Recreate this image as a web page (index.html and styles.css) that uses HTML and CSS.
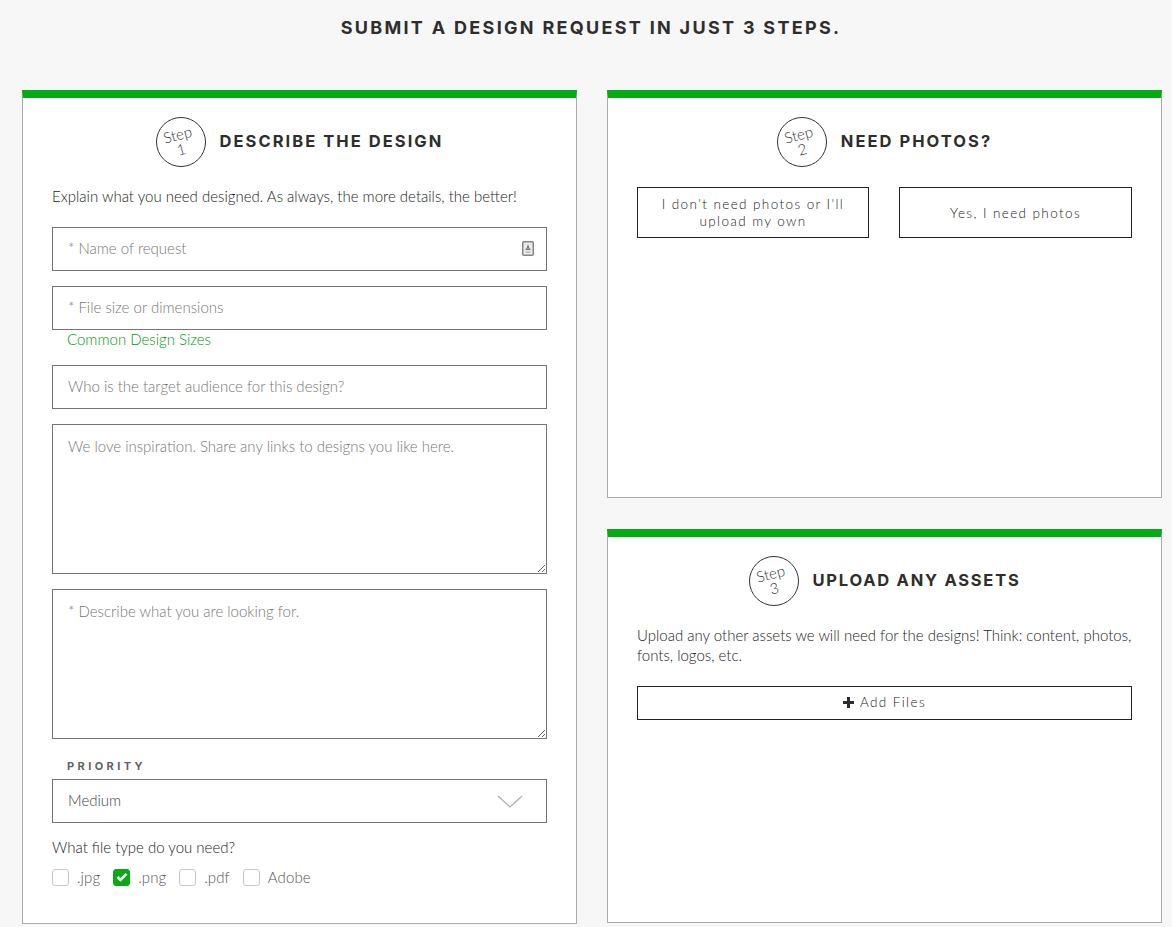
FILE: index.html
```html
<!DOCTYPE html>
<html lang="en">
<head>
<meta charset="utf-8">
<title>Submit a design request</title>
<link rel="stylesheet" href="styles.css">
</head>
<body>
<h1 class="page-title">SUBMIT A DESIGN REQUEST IN JUST 3 STEPS.</h1>
<main class="layout">
  <section class="card card-left">
    <header class="step-head">
      <div class="step-badge"><span>Step<br>1</span></div>
      <h2>DESCRIBE THE DESIGN</h2>
    </header>
    <p class="intro">Explain what you need designed. As always, the more details, the better!</p>
    <div class="field has-icon">
      <input type="text" placeholder="* Name of request">
      <svg class="contact-icon" width="12" height="15" viewBox="0 0 12 15"><rect x="0.75" y="0.75" width="10.5" height="13.5" rx="1" fill="#ececec" stroke="#858585" stroke-width="1.5"/><path d="M6 3 L7.5 7.5 H4.5 Z" fill="#777"/><rect x="3.5" y="7.5" width="5" height="1.5" fill="#777"/><rect x="3.5" y="10.5" width="5" height="1.2" fill="#aaa"/></svg>
    </div>
    <input class="gap-top" type="text" placeholder="* File size or dimensions">
    <a class="sizes-link" href="#">Common Design Sizes</a>
    <input class="after-link" type="text" placeholder="Who is the target audience for this design?">
    <textarea class="gap-top" placeholder="We love inspiration. Share any links to designs you like here."></textarea>
    <textarea class="gap-top" placeholder="* Describe what you are looking for."></textarea>
    <div class="priority-label">PRIORITY</div>
    <div class="select-box">
      <span>Medium</span>
      <svg width="26" height="13" viewBox="0 0 26 13"><path d="M1 1 L13 12 L25 1" fill="none" stroke="#aaaab0" stroke-width="1.2"/></svg>
    </div>
    <p class="file-q">What file type do you need?</p>
    <div class="checks">
      <label class="check"><span class="box"></span>.jpg</label>
      <label class="check"><span class="box on"><svg width="12" height="10" viewBox="0 0 12 10"><path d="M1.5 5 L4.5 8 L10.5 1.8" fill="none" stroke="#fff" stroke-width="2.6"/></svg></span>.png</label>
      <label class="check"><span class="box"></span>.pdf</label>
      <label class="check"><span class="box"></span>Adobe</label>
    </div>
  </section>
  <div class="right-col">
    <section class="card card-photos">
      <header class="step-head">
        <div class="step-badge"><span>Step<br>2</span></div>
        <h2>NEED PHOTOS?</h2>
      </header>
      <div class="photo-btns">
        <button type="button" class="btn">I don't need photos or I'll upload my own</button>
        <button type="button" class="btn">Yes, I need photos</button>
      </div>
    </section>
    <section class="card card-assets">
      <header class="step-head">
        <div class="step-badge"><span>Step<br>3</span></div>
        <h2 class="tight">UPLOAD ANY ASSETS</h2>
      </header>
      <p class="intro assets-text">Upload any other assets we will need for the designs! Think: content, photos, fonts, logos, etc.</p>
      <button type="button" class="btn add-btn"><svg width="11" height="11" viewBox="0 0 11 11"><path d="M5.5 0 V11 M0 5.5 H11" stroke="#2b2b2b" stroke-width="3"/></svg>Add Files</button>
    </section>
  </div>
</main>
</body>
</html>
```
FILE: styles.css
```css
* { box-sizing: border-box; }
html, body { margin: 0; padding: 0; }
body {
  background: #f7f7f7;
  font-family: "Lato", "Liberation Sans", sans-serif;
  font-weight: 300;
  color: #222;
  height: 927px;
  overflow: hidden;
}
.page-title {
  margin: 0;
  padding: 17px 0 0 10px;
  height: 90px;
  text-align: center;
  font-family: "Inter", "Liberation Sans", sans-serif;
  font-weight: 700;
  font-size: 18px;
  line-height: 22px;
  letter-spacing: 2.3px;
  color: #2e2e2e;
}
.layout {
  display: grid;
  grid-template-columns: 555px 555px;
  column-gap: 30px;
  padding-left: 22px;
}
.card {
  background: #fff;
  border: 1px solid #ababab;
  border-top: 8px solid #05ab13;
  padding: 19px 29px 0;
}
.card-left { height: 834px; display: flex; flex-direction: column; }
.right-col { display: flex; flex-direction: column; gap: 31px; }
.card-photos { height: 408px; }
.card-assets { height: 394px; }
.step-head {
  display: flex;
  align-items: center;
  justify-content: center;
  gap: 14px;
  height: 50px;
}
.step-head h2 {
  margin: 0 0 2px;
  font-family: "Inter", "Liberation Sans", sans-serif;
  font-weight: 700;
  font-size: 16.5px;
  letter-spacing: 2.05px;
  color: #2e2e2e;
}
.step-head h2.tight { letter-spacing: 1.75px; }
.step-badge {
  width: 50px;
  height: 50px;
  flex: none;
  border: 1px solid #333;
  border-radius: 50%;
  display: flex;
  align-items: center;
  justify-content: center;
}
.step-badge span {
  margin-right: 2px;
  transform: rotate(-15deg);
  text-align: center;
  font-size: 15px;
  line-height: 15px;
  color: #333;
}
.intro {
  margin: 19px 0 0;
  font-size: 15px;
  line-height: 20px;
  color: #222;
}
input, textarea {
  display: block;
  width: 100%;
  background: #fff;
  border: 1px solid #757575;
  border-radius: 0;
  font-family: inherit;
  font-weight: 300;
  font-size: 15px;
  color: #333;
  padding: 0 15px;
  outline: none;
}
input { height: 44px; padding-bottom: 2px; }
textarea { height: 150px; padding-top: 12px; line-height: 18px; resize: vertical; }
::placeholder { color: #777; opacity: 1; }
.field { position: relative; margin-top: 21px; }
.contact-icon { position: absolute; right: 13px; top: 14px; }
.gap-top { margin-top: 15px; flex: none; }
.sizes-link {
  margin: 0 0 0 15px;
  height: 20px;
  line-height: 19px;
  font-size: 15px;
  color: #009a0a;
  text-decoration: none;
}
.after-link { margin-top: 15px; flex: none; }
.priority-label {
  margin: 21px 0 0 15px;
  height: 12px;
  line-height: 12px;
  font-family: "Inter", "Liberation Sans", sans-serif;
  font-weight: 700;
  font-size: 11px;
  letter-spacing: 3.4px;
  color: #5f5f6b;
}
.select-box {
  margin-top: 7px;
  height: 44px;
  flex: none;
  border: 1px solid #757575;
  display: flex;
  align-items: center;
  justify-content: space-between;
  padding: 0 23px 0 15px;
  font-size: 15px;
  color: #444;
}
.select-box span { margin-top: -2px; }
.file-q { margin: 14px 0 0; font-size: 15px; line-height: 20px; color: #222; }
.checks { display: flex; margin-top: 10px; gap: 13px; }
.check {
  display: flex;
  align-items: center;
  gap: 8px;
  font-size: 15px;
  line-height: 20px;
  letter-spacing: 0.1px;
  color: #555;
}
.box {
  width: 17px;
  height: 17px;
  border: 1px solid #c8c8c8;
  border-radius: 3px;
  background: #fff;
  display: flex;
  align-items: center;
  justify-content: center;
}
.box.on { background: #05ab13; border-color: #05ab13; }
.btn {
  background: #fff;
  border: 1px solid #222;
  border-radius: 0;
  font-family: "Lato", "Liberation Sans", sans-serif;
  font-weight: 300;
  font-size: 13.5px;
  line-height: 17px;
  letter-spacing: 1.4px;
  color: #222;
  padding: 0 20px 0;
}
.photo-btns {
  display: grid;
  grid-template-columns: 232px 233px;
  column-gap: 30px;
  margin-top: 20px;
}
.photo-btns .btn { height: 51px; }
.photo-btns .btn + .btn { padding-top: 1px; }
.assets-text { margin-top: 19px; }
.add-btn {
  display: flex;
  align-items: center;
  justify-content: center;
  gap: 6px;
  width: 100%;
  height: 34px;
  margin-top: 21px;
  padding-bottom: 1px;
}
```
